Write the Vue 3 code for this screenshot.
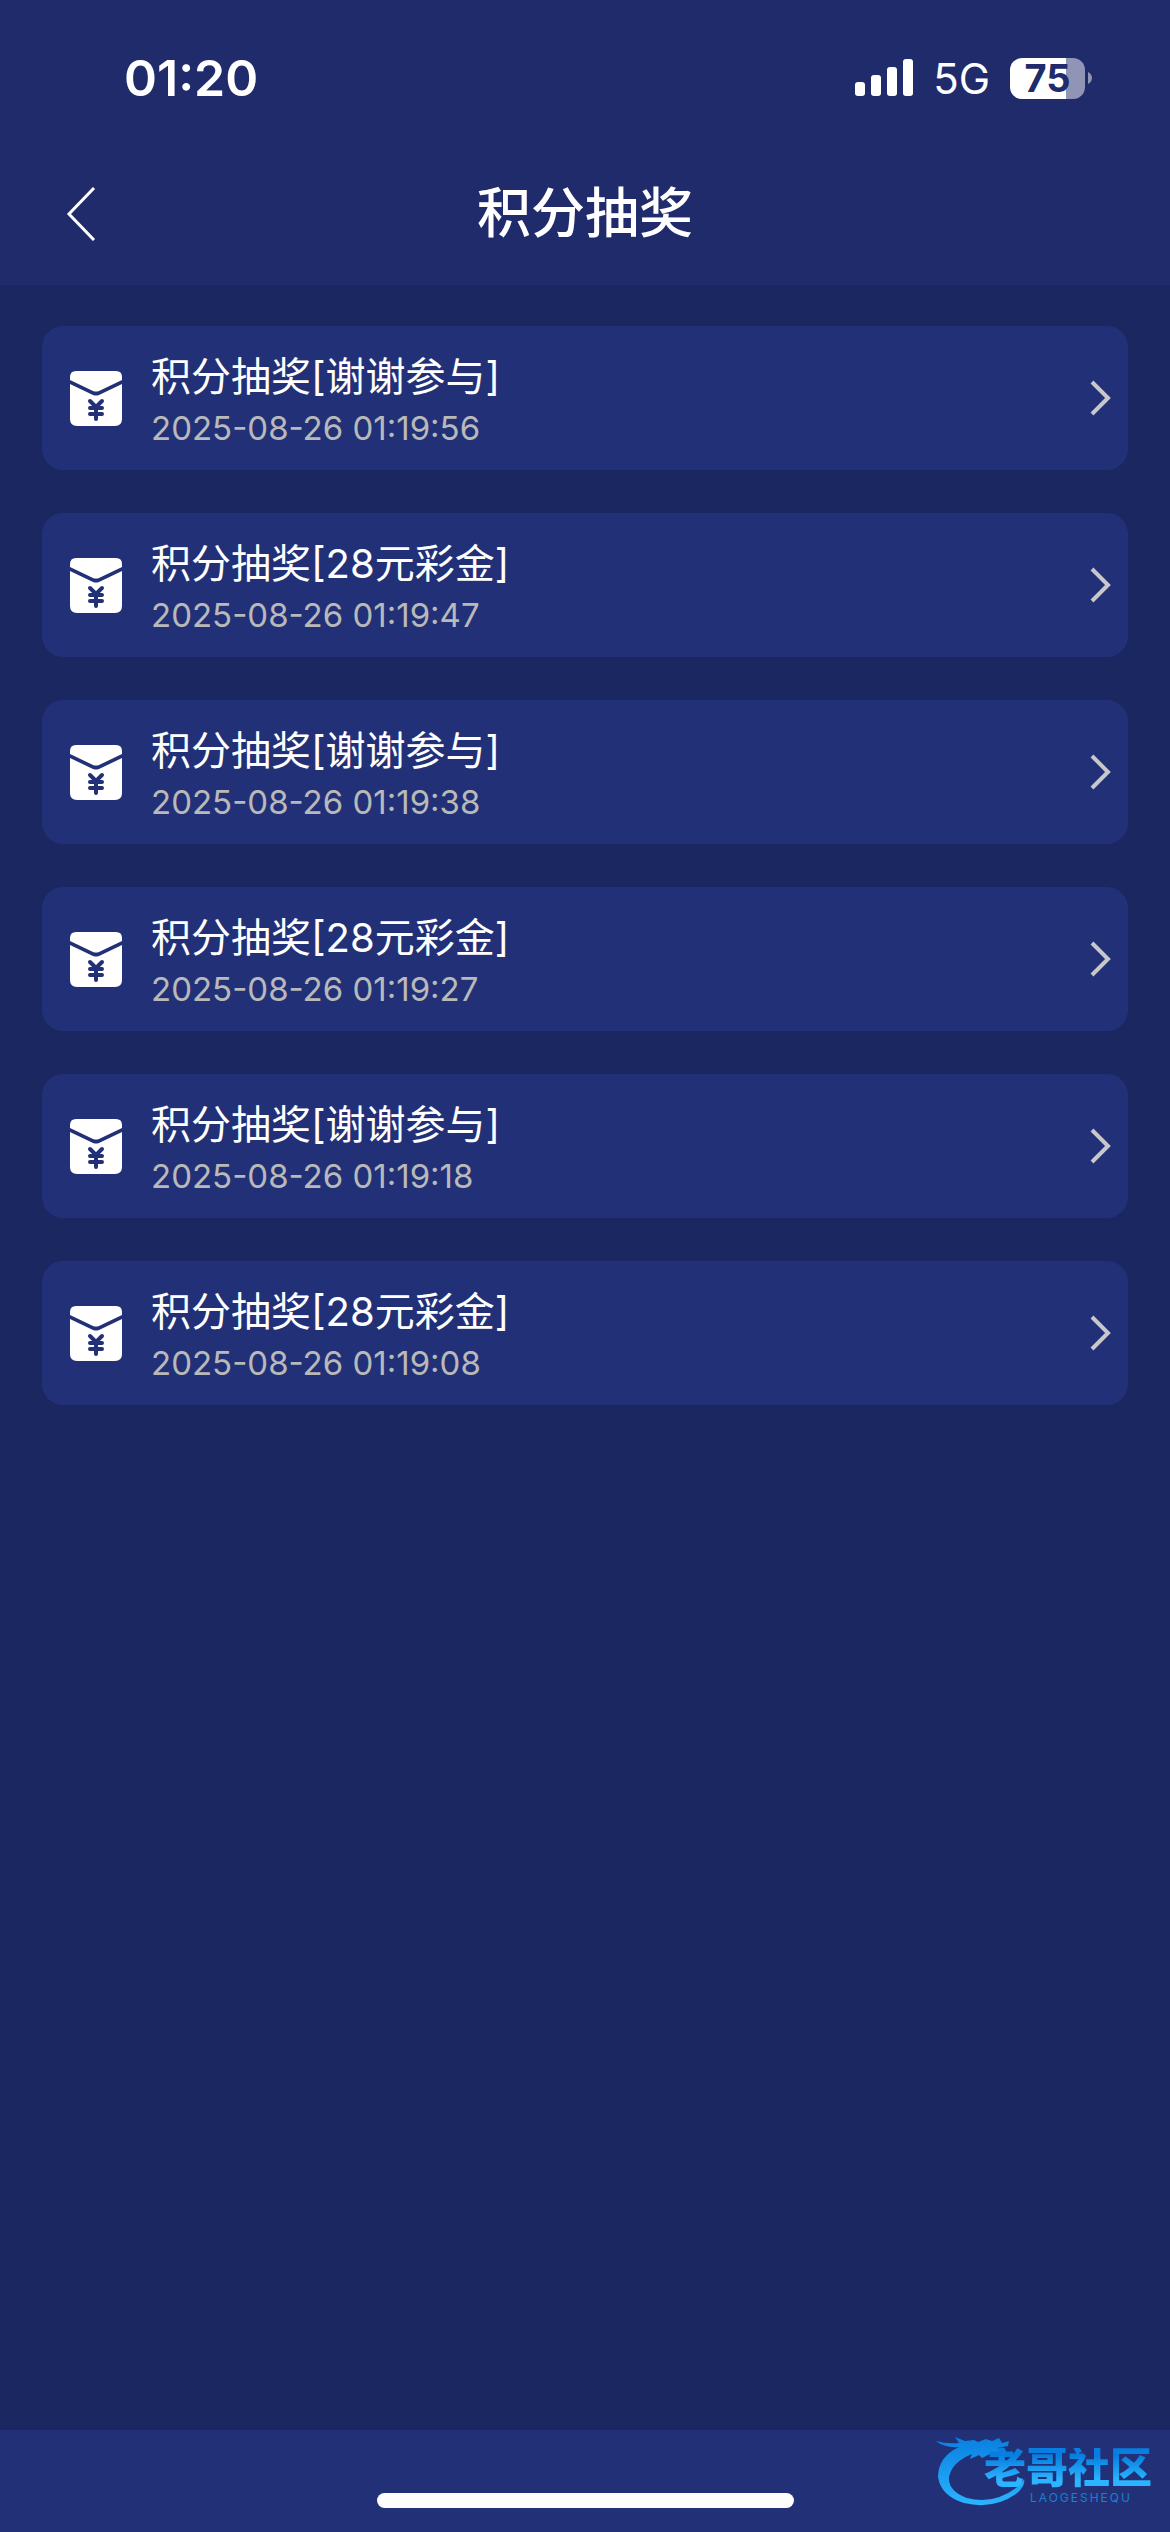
<template>
  <div class="page">
    <header class="top">
      <div class="status">
        <time class="clock">01:20</time>
        <div class="indicators">
          <svg class="signal" viewBox="0 0 58 38" aria-hidden="true">
            <rect x="0" y="23" width="10" height="14" rx="3" />
            <rect x="16" y="16" width="10" height="21" rx="3" />
            <rect x="32" y="8" width="10" height="29" rx="3" />
            <rect x="48" y="0" width="10" height="37" rx="3" />
          </svg>
          <span class="network">5G</span>
          <div class="battery">
            <div class="cell" :style="{ '--level': battery + '%' }">{{ battery }}</div>
            <svg class="cap" viewBox="0 0 4 12" aria-hidden="true">
              <path d="M0 0C2 1 4 3 4 6S2 11 0 12Z" />
            </svg>
          </div>
        </div>
      </div>
      <nav class="navbar">
        <button class="back" type="button" aria-label="返回">
          <svg viewBox="0 0 30 54" aria-hidden="true">
            <path d="M28 1L3 27L28 53" />
          </svg>
        </button>
        <h1>积分抽奖</h1>
      </nav>
    </header>

    <main class="list">
      <a v-for="item in records" :key="item.time" class="card" href="#">
        <svg class="envelope" viewBox="0 0 52 55" aria-hidden="true">
          <path d="M0 9V6Q0 0 6 0H46Q52 0 52 6V9L29 20Q26 21 23 20Z" />
          <path d="M0 13L23 24Q26 25 29 24L52 13V48Q52 55 45 55H7Q0 55 0 48Z" />
          <path class="yen" d="M20 30L26 36L32 30M20 37H32M20 43H32M26 36V48" />
        </svg>
        <div class="info">
          <span class="name">积分抽奖[{{ item.prize }}]</span>
          <time class="time">{{ item.time }}</time>
        </div>
        <svg class="arrow" viewBox="0 0 22 36" aria-hidden="true">
          <path d="M2 2L18 18L2 34" />
        </svg>
      </a>
    </main>

    <footer class="bottom">
      <div class="home-bar"></div>
      <div class="brand">
        <svg class="dragon" viewBox="0 0 92 78" aria-hidden="true">
          <defs>
            <linearGradient id="dragonFill" x1="0" y1="0" x2="0" y2="1">
              <stop offset="0" stop-color="#087fe0" />
              <stop offset="1" stop-color="#2bb4ff" />
            </linearGradient>
          </defs>
          <path
            fill="url(#dragonFill)"
            d="M0 11Q10 14 23 13L19 7L29 11L38 10L42 12L50 9L56 11L63 8L66 13L73 11L72 16L61 18L70 20L69 24L61 22L64 27L54 24L46 28L43 25L34 29L36 24Q16 32 13 47Q12 61 31 68Q57 75 80 58Q86 53 88 49Q90 56 80 64Q57 80 28 73Q5 66 2 47Q2 27 23 17Q8 18 0 11Z"
          />
        </svg>
        <div class="brand-text">
          <span class="brand-name">老哥社区</span>
          <span class="brand-sub">LAOGESHEQU</span>
        </div>
      </div>
    </footer>
  </div>
</template>

<script setup>
import { ref } from "vue";

const battery = ref(75);

const records = ref([
  { prize: "谢谢参与", time: "2025-08-26 01:19:56" },
  { prize: "28元彩金", time: "2025-08-26 01:19:47" },
  { prize: "谢谢参与", time: "2025-08-26 01:19:38" },
  { prize: "28元彩金", time: "2025-08-26 01:19:27" },
  { prize: "谢谢参与", time: "2025-08-26 01:19:18" },
  { prize: "28元彩金", time: "2025-08-26 01:19:08" },
]);
</script>

<style>
body {
  margin: 0;
  background: #1b2761;
}
</style>

<style scoped>
.page {
  display: flex;
  flex-direction: column;
  min-height: 100vh;
  background: #1b2761;
  color: #fff;
  font-family: Inter, "Noto Sans CJK SC", sans-serif;
}
.top {
  background: #202b6b;
}
.status {
  display: flex;
  align-items: center;
  justify-content: space-between;
  height: 156px;
  padding: 0 78px 0 124px;
}
.clock {
  font-size: 50px;
  font-weight: 600;
}
.indicators {
  display: flex;
  align-items: center;
}
.signal {
  width: 58px;
  height: 38px;
  fill: #fff;
}
.network {
  margin: 0 20px;
  font-size: 42px;
}
.battery {
  display: flex;
  align-items: center;
  gap: 3px;
}
.cell {
  width: 75px;
  height: 41px;
  border-radius: 12px;
  background: linear-gradient(to right, #fff var(--level), #9095b5 var(--level));
  color: #202b6b;
  font-size: 38px;
  font-weight: 700;
  line-height: 41px;
  text-align: center;
}
.cap {
  width: 4px;
  height: 12px;
  fill: #9095b5;
}
.navbar {
  display: grid;
  grid-template-columns: 1fr auto 1fr;
  align-items: center;
  box-sizing: border-box;
  height: 129px;
  padding: 0 66px 14px;
}
.navbar h1 {
  margin: 0;
  font-size: 54px;
  font-weight: 500;
  line-height: 80px;
}
.back {
  justify-self: start;
  display: flex;
  padding: 0;
  border: 0;
  background: none;
}
.back svg {
  width: 30px;
  height: 54px;
  fill: none;
  stroke: #fff;
  stroke-width: 3;
}
.list {
  display: flex;
  flex: 1;
  flex-direction: column;
  gap: 43px;
  padding: 41px 42px;
}
.card {
  display: flex;
  align-items: center;
  box-sizing: border-box;
  height: 144px;
  padding: 0 16px 0 28px;
  border-radius: 21px;
  background: #223177;
  color: #fff;
  text-decoration: none;
}
.envelope {
  width: 52px;
  height: 55px;
  margin-right: 29px;
  fill: #fff;
}
.yen {
  fill: none;
  stroke: #223177;
  stroke-width: 4;
  stroke-linecap: round;
}
.info {
  display: flex;
  flex: 1;
  flex-direction: column;
  padding-top: 4px;
}
.name {
  font-size: 40px;
  line-height: 56px;
}
.time {
  color: #b9b9b9;
  font-size: 33px;
  line-height: 46px;
}
.arrow {
  width: 22px;
  height: 36px;
  fill: none;
  stroke: #c8c8cc;
  stroke-width: 4;
}
.bottom {
  position: relative;
  display: flex;
  align-items: flex-end;
  justify-content: center;
  box-sizing: border-box;
  height: 102px;
  padding-bottom: 24px;
  background: #223177;
}
.home-bar {
  width: 417px;
  height: 15px;
  border-radius: 8px;
  background: #fdfdfd;
}
.brand {
  position: absolute;
  right: 18px;
  bottom: 24px;
  display: flex;
}
.dragon {
  width: 92px;
  height: 78px;
}
.brand-text {
  display: flex;
  flex-direction: column;
  gap: 4px;
  margin: 18px 0 0 -44px;
}
.brand-name {
  background: linear-gradient(#087fe0 20%, #2bb4ff 80%);
  background-clip: text;
  color: transparent;
  font-size: 42px;
  font-weight: 900;
  line-height: 40px;
}
.brand-sub {
  margin-left: 46px;
  color: #1b7fd4;
  font-size: 12px;
  line-height: 12px;
  letter-spacing: 2px;
}
</style>
